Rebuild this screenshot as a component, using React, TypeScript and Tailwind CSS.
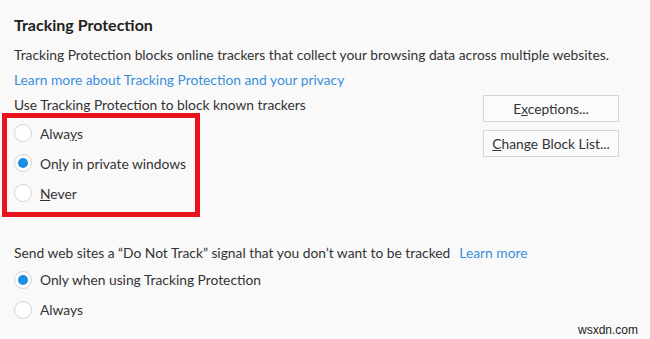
import React from "react";

function Radio({ checked }: { checked?: boolean }) {
  return (
    <span className="flex h-[18px] w-[18px] shrink-0 items-center justify-center rounded-full border border-[#d4d4d4] bg-white">
      {checked && <span className="h-[10px] w-[10px] rounded-full bg-[#1a8fe0]" />}
    </span>
  );
}

function Row({ checked, children, pl }: { checked?: boolean; children: React.ReactNode; pl: string }) {
  return (
    <div className={`flex h-[30px] items-center gap-[8px] whitespace-nowrap ${pl}`}>
      <Radio checked={checked} />
      <span>{children}</span>
    </div>
  );
}

export default function App() {
  return (
    <div
      className="relative h-[339px] w-[650px] overflow-hidden whitespace-nowrap bg-[#f9f9f9] text-[13.8px] leading-[25px] text-[#333333]"
      style={{ fontFamily: 'Lato, "Open Sans", sans-serif' }}
    >
      <div className="mt-[10px] flex h-[28px] items-center pl-[14px] text-[16px] font-bold text-[#222]">Tracking Protection</div>
      <div className="mt-[4px] pl-[14px]">Tracking Protection blocks online trackers that collect your browsing data across multiple websites.</div>
      <div className="pl-[14px] text-[#3a8fdc]">Learn more about Tracking Protection and your privacy</div>
      <div className="flex">
        <div className="flex w-[483px] flex-col">
          <div className="pl-[14px]">Use Tracking Protection to block known trackers</div>
          <div className="ml-[2px] mt-[-4px] w-[198px] border-[5px] border-[#e8131b] pb-[4px]">
            <Row pl="pl-[7px]">Alwa<span className="underline">y</span>s</Row>
            <Row pl="pl-[7px]" checked>On<span className="underline">l</span>y in private windows</Row>
            <Row pl="pl-[7px]"><span className="underline">N</span>ever</Row>
          </div>
        </div>
        <div className="mt-[2.5px] flex flex-col gap-[8px]">
          <button className="h-[27px] w-[136px] border border-[#d6d6d6] bg-[#fbfbfb] text-[13.8px] text-[#333]">
            E<span className="underline">x</span>ceptions...
          </button>
          <button className="h-[27px] w-[136px] border border-[#d6d6d6] bg-[#fbfbfb] text-[13.8px] text-[#333]">
            <span className="underline">C</span>hange Block List...
          </button>
        </div>
      </div>
      <div className="mt-[22.5px] pl-[14px]">
        Send web sites a “Do Not Track” signal that you don’t want to be tracked
        <span className="ml-[9px] text-[#3a8fdc]">Learn more</span>
      </div>
      <div>
        <Row pl="pl-[14px]" checked>Only when using Tracking Protection</Row>
        <Row pl="pl-[14px]">Always</Row>
      </div>
      <div className="absolute bottom-[1px] right-[12px] text-[12px] leading-[16px] text-[#222]" style={{ fontFamily: '"Liberation Sans", sans-serif' }}>
        wsxdn.com
      </div>
    </div>
  );
}
